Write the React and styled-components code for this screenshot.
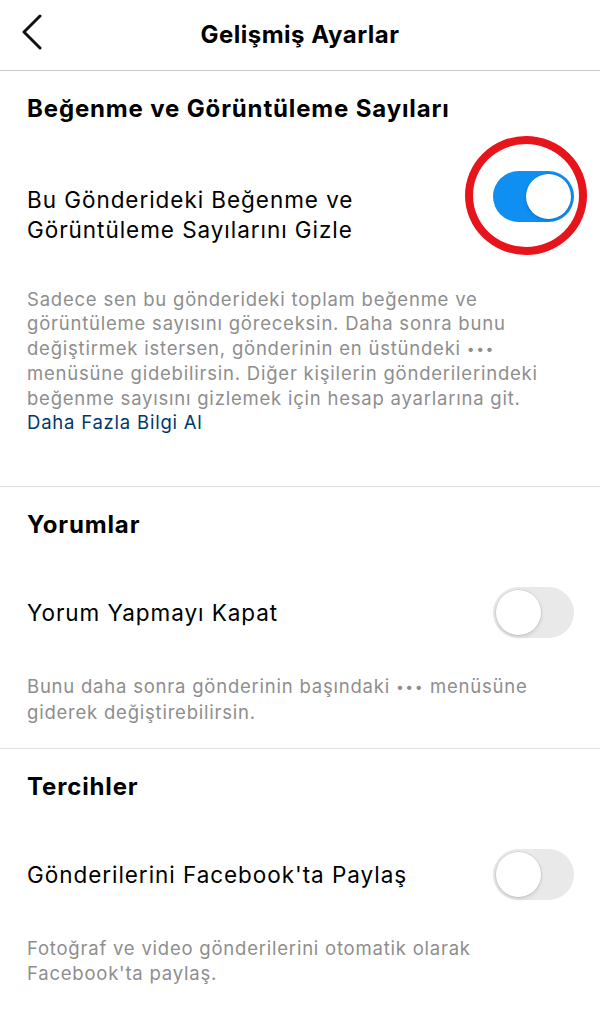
import React, { useState } from "react";
import styled, { createGlobalStyle } from "styled-components";

const GlobalStyle = createGlobalStyle`
  html, body {
    margin: 0;
    padding: 0;
    background: #fff;
  }
  body {
    font-family: Inter, "Noto Sans", Roboto, sans-serif;
    color: #000;
    -webkit-font-smoothing: antialiased;
  }
`;

const Page = styled.div`
  width: 600px;
  min-height: 1024px;
  background: #fff;
`;

const Header = styled.header`
  height: 70px;
  display: flex;
  align-items: center;
  justify-content: center;
  position: relative;
  border-bottom: 1px solid #c9c9c9;
`;

const BackButton = styled.button`
  position: absolute;
  left: 14px;
  top: 12px;
  width: 36px;
  height: 40px;
  border: none;
  background: none;
  padding: 0;
  display: flex;
  align-items: center;
  justify-content: center;
  cursor: pointer;
`;

const HeaderTitle = styled.h1`
  margin: 0 0 2px;
  font-size: 24px;
  font-weight: 700;
  letter-spacing: 0.5px;
`;

const Section = styled.section`
  padding: 20px 20px ${p => p.$bottom}px 27px;
  border-bottom: ${p => (p.$last ? "none" : "1px solid #e2e2e2")};
`;

const SectionTitle = styled.h2`
  margin: 0;
  font-size: 24px;
  line-height: 36px;
  font-weight: 700;
  letter-spacing: 0.85px;
`;

const Row = styled.div`
  margin-top: 44px;
  display: flex;
  align-items: ${p => (p.$top ? "flex-start" : "center")};
  justify-content: space-between;
  gap: 16px;
  padding-right: 6px;
`;

const Label = styled.div`
  font-size: 22.5px;
  line-height: 30px;
  letter-spacing: 0.95px;
  white-space: nowrap;
  padding-top: ${p => (p.$top ? 14 : 0)}px;
`;

const ToggleWrap = styled.div`
  position: relative;
  flex-shrink: 0;
`;

const Track = styled.button`
  display: block;
  width: 81px;
  height: 51px;
  border-radius: 26px;
  border: none;
  padding: 0;
  cursor: pointer;
  position: relative;
  background: ${p => (p.$on ? "#0f8ff2" : "#e9e9ea")};
  transition: background 0.2s ease;
`;

const Knob = styled.span`
  position: absolute;
  top: 3px;
  left: ${p => (p.$on ? 33 : 3)}px;
  width: 45px;
  height: 45px;
  border-radius: 50%;
  background: #fff;
  box-shadow: 0 0 0 1px rgba(0, 0, 0, 0.06), 0 2px 4px rgba(0, 0, 0, 0.12);
  transition: left 0.2s ease;
`;

const Highlight = styled.span`
  position: absolute;
  left: -28px;
  top: -35px;
  width: 122px;
  height: 119px;
  border: 8px solid #e8141c;
  border-radius: 50%;
  box-sizing: border-box;
  pointer-events: none;
`;

const Description = styled.p`
  margin: ${p => p.$gap}px 0 0;
  font-size: 18.5px;
  line-height: 24.4px;
  color: #8e8e8e;
  letter-spacing: 0.78px;
  white-space: nowrap;
`;

const Dots = styled.span`
  letter-spacing: 1.5px;
  font-size: 14px;
  vertical-align: 1px;
`;

const Link = styled.a`
  display: block;
  color: #00376b;
  text-decoration: none;
`;

const Toggle = ({ on, onChange, highlighted }) => (
  <ToggleWrap>
    <Track $on={on} onClick={() => onChange(!on)} aria-pressed={on}>
      <Knob $on={on} />
    </Track>
    {highlighted && <Highlight />}
  </ToggleWrap>
);

const ChevronLeft = () => (
  <svg width="22" height="36" viewBox="0 0 22 36" fill="none">
    <path
      d="M19 2 L3 18 L19 34"
      stroke="#111"
      strokeWidth="3"
      strokeLinecap="round"
      strokeLinejoin="round"
    />
  </svg>
);

export default function App() {
  const [hideLikes, setHideLikes] = useState(true);
  const [noComments, setNoComments] = useState(false);
  const [shareFb, setShareFb] = useState(false);

  return (
    <Page>
      <GlobalStyle />
      <Header>
        <BackButton aria-label="Geri">
          <ChevronLeft />
        </BackButton>
        <HeaderTitle>Gelişmiş Ayarlar</HeaderTitle>
      </Header>

      <Section $bottom={52}>
        <SectionTitle>Beğenme ve Görüntüleme Sayıları</SectionTitle>
        <Row $top>
          <Label $top>
            Bu Gönderideki Beğenme ve
            <br />
            Görüntüleme Sayılarını Gizle
          </Label>
          <Toggle on={hideLikes} onChange={setHideLikes} highlighted />
        </Row>
        <Description $gap={42}>
          Sadece sen bu gönderideki toplam beğenme ve
          <br />
          görüntüleme sayısını göreceksin. Daha sonra bunu
          <br />
          değiştirmek istersen, gönderinin en üstündeki <Dots>•••</Dots>
          <br />
          menüsüne gidebilirsin. Diğer kişilerin gönderilerindeki
          <br />
          beğenme sayısını gizlemek için hesap ayarlarına git.
          <Link href="#">Daha Fazla Bilgi Al</Link>
        </Description>
      </Section>

      <Section $bottom={24}>
        <SectionTitle>Yorumlar</SectionTitle>
        <Row>
          <Label>Yorum Yapmayı Kapat</Label>
          <Toggle on={noComments} onChange={setNoComments} />
        </Row>
        <Description $gap={36}>
          Bunu daha sonra gönderinin başındaki <Dots>•••</Dots> menüsüne
          <br />
          giderek değiştirebilirsin.
        </Description>
      </Section>

      <Section $bottom={30} $last>
        <SectionTitle>Tercihler</SectionTitle>
        <Row>
          <Label>Gönderilerini Facebook'ta Paylaş</Label>
          <Toggle on={shareFb} onChange={setShareFb} />
        </Row>
        <Description $gap={36}>
          Fotoğraf ve video gönderilerini otomatik olarak
          <br />
          Facebook'ta paylaş.
        </Description>
      </Section>
    </Page>
  );
}
